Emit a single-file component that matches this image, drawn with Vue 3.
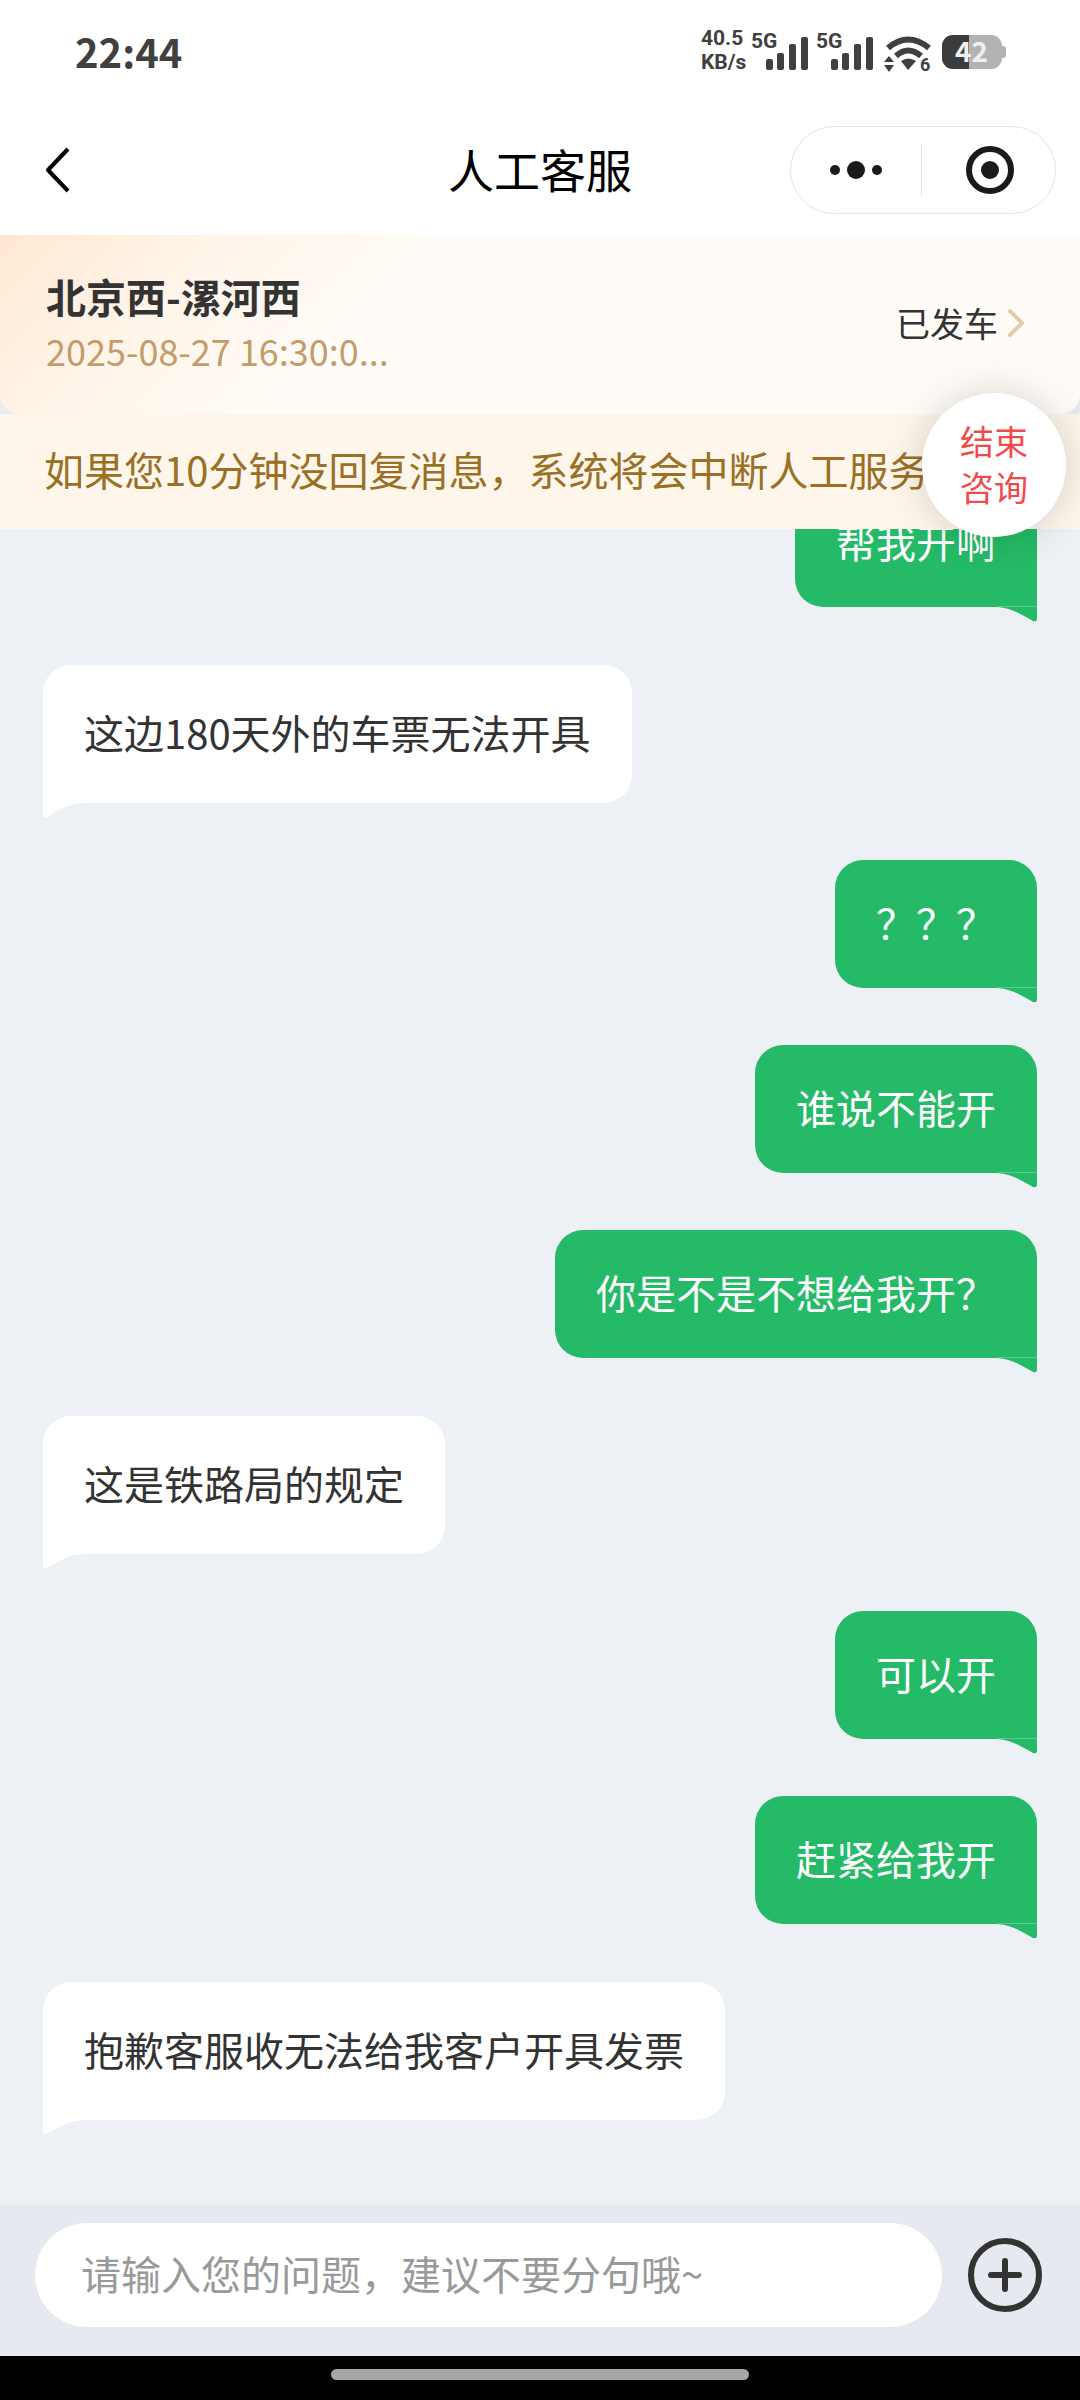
<script setup>
import { ref } from 'vue'

const draft = ref('')
const bars = [
  { x: 17, y: 27, h: 11 },
  { x: 28, y: 21, h: 17 },
  { x: 40, y: 12, h: 26 },
  { x: 52, y: 5, h: 33 },
]
const messages = [
  { id: 1, mine: true, text: '帮我开啊' },
  { id: 2, mine: false, text: '这边180天外的车票无法开具' },
  { id: 3, mine: true, text: '？？？' },
  { id: 4, mine: true, text: '谁说不能开' },
  { id: 5, mine: true, text: '你是不是不想给我开？' },
  { id: 6, mine: false, text: '这是铁路局的规定' },
  { id: 7, mine: true, text: '可以开' },
  { id: 8, mine: true, text: '赶紧给我开' },
  { id: 9, mine: false, text: '抱歉客服收无法给我客户开具发票' },
]
</script>

<template>
  <div class="app">
    <div class="status">
      <span class="clock">22:44</span>
      <div class="indicators">
        <div class="speed"><span>40.5</span><span>KB/s</span></div>
        <svg v-for="n in 2" :key="n" class="signal" width="60" height="40" viewBox="0 0 60 40">
          <text x="2" y="16" font-size="21">5G</text>
          <rect v-for="b in bars" :key="b.x" :x="b.x" :y="b.y" width="7" :height="b.h" rx="2" />
        </svg>
        <svg class="wifi" width="48" height="40" viewBox="0 0 48 40">
          <g fill="none" stroke="#404040" stroke-width="6">
            <path d="M4 16 Q24 -1 45 16" />
            <path d="M12 24 Q24 13 37 24" />
          </g>
          <path d="M17 29 Q24 24 32 29 L24 38Z" />
          <path d="M0 30 5 24 10 30ZM0 33H10L5 40Z" />
          <text x="36" y="39" font-size="18">6</text>
        </svg>
        <svg class="battery" width="64" height="34" viewBox="0 0 64 34">
          <rect width="60" height="34" rx="11" fill="#b3b3b3" />
          <path d="M60 11h1a3 3 0 0 1 3 3v6a3 3 0 0 1-3 3h-1z" fill="#b3b3b3" />
          <path d="M11 0H27V34H11A11 11 0 0 1 0 23V11A11 11 0 0 1 11 0Z" fill="#3c3c3c" />
          <text x="13" y="27" font-size="28" fill="#f0f0f0">42</text>
        </svg>
      </div>
    </div>

    <header class="nav">
      <button class="back" type="button" aria-label="返回">
        <svg width="24" height="44" viewBox="0 0 24 44" fill="none" stroke="#000" stroke-width="4" stroke-linejoin="round">
          <path d="M22 1 2 22 22 43" />
        </svg>
      </button>
      <h1>人工客服</h1>
      <div class="capsule">
        <button type="button" aria-label="更多">
          <svg width="52" height="18" viewBox="0 0 52 18" fill="#1a1a1a">
            <circle cx="5" cy="9" r="5" /><circle cx="26" cy="9" r="9" /><circle cx="47" cy="9" r="5" />
          </svg>
        </button>
        <button type="button" aria-label="关闭">
          <svg width="48" height="48" viewBox="0 0 48 48">
            <circle cx="24" cy="24" r="21" fill="none" stroke="#1a1a1a" stroke-width="6" />
            <circle cx="24" cy="24" r="9" fill="#1a1a1a" />
          </svg>
        </button>
      </div>
    </header>

    <section class="trip-wrap">
      <div class="trip">
        <div class="trip-info">
          <h2>北京西-漯河西</h2>
          <p>2025-08-27 16:30:0...</p>
        </div>
        <a class="trip-state" href="#">
          <span>已发车</span>
          <svg width="16" height="28" viewBox="0 0 16 28" fill="none" stroke="#e2cba8" stroke-width="4" stroke-linecap="round" stroke-linejoin="round">
            <path d="M2 2 14 14 2 26" />
          </svg>
        </a>
      </div>
    </section>

    <div class="notice">
      <p>如果您10分钟没回复消息，系统将会中断人工服务</p>
      <button class="finish" type="button">结束<br>咨询</button>
    </div>

    <main class="chat">
      <div v-for="m in messages" :key="m.id" class="bubble" :class="m.mine ? 'mine' : 'theirs'">
        {{ m.text }}
        <svg class="tail" width="40" height="15" viewBox="0 0 40 15">
          <path d="M0 0H40V12Q40 15 36 14C25 8 16 1 0 0Z" />
        </svg>
      </div>
    </main>

    <form class="composer" @submit.prevent>
      <input v-model="draft" type="text" aria-label="问题" placeholder="请输入您的问题，建议不要分句哦~">
      <button type="button" aria-label="添加">
        <svg width="76" height="76" viewBox="0 0 76 76" fill="none" stroke="#333" stroke-width="6" stroke-linecap="round">
          <circle cx="38" cy="38" r="34" />
          <path d="M38 24V52M24 38H52" />
        </svg>
      </button>
    </form>

    <div class="gesture"><span></span></div>
  </div>
</template>

<style>
body {
  margin: 0;
}
</style>

<style scoped>
.app {
  display: flex;
  flex-direction: column;
  height: 100vh;
  background: #edf0f5;
  color: #333;
  font-family: "Noto Sans CJK SC", sans-serif;
  font-size: 40px;
}
h1, h2, p {
  margin: 0;
}
button {
  display: flex;
  align-items: center;
  justify-content: center;
  padding: 0;
  border: 0;
  background: none;
  font-family: inherit;
}
svg {
  display: block;
  flex: none;
  overflow: visible;
}
.status {
  display: flex;
  flex: none;
  align-items: center;
  justify-content: space-between;
  height: 104px;
  padding: 0 74px 0 75px;
  background: #fff;
  color: #404040;
  font-weight: 700;
}
.clock {
  padding-bottom: 2px;
}
.indicators {
  display: flex;
  align-items: center;
  fill: #404040;
}
.speed {
  display: flex;
  flex-direction: column;
  width: 48px;
  padding-bottom: 4px;
  font-family: Roboto, sans-serif;
  font-size: 21px;
  line-height: 24px;
}
.signal {
  margin-right: 5px;
}
.signal text, .wifi text {
  font-family: Roboto, sans-serif;
}
.wifi {
  margin: 0 10px 0 5px;
}
.nav {
  display: grid;
  flex: none;
  grid-template-columns: 1fr auto 1fr;
  align-items: center;
  height: 131px;
  padding: 0 24px 0 46px;
  background: #fff;
}
.back {
  justify-self: start;
}
.nav h1 {
  padding: 0 0 4px 22px;
  margin-right: 44px;
  color: #000;
  font-size: 46px;
  font-weight: 400;
  line-height: 60px;
}
.capsule {
  display: flex;
  justify-self: end;
  align-items: center;
  box-sizing: border-box;
  width: 266px;
  height: 88px;
  border: 1px solid #e4e4e4;
  border-radius: 44px;
}
.capsule button {
  flex: 1;
  height: 52px;
}
.capsule button + button {
  padding-left: 4px;
  border-left: 1px solid #e4e4e4;
}
.trip-wrap {
  flex: none;
  background: #e8eaed;
}
.trip {
  display: flex;
  align-items: center;
  justify-content: space-between;
  box-sizing: border-box;
  height: 179px;
  padding: 0 56px 4px 46px;
  border-radius: 0 0 20px 20px;
  background: linear-gradient(135deg, #ffe8d2 0, #fff4e8 150px, #fffcf8 330px);
}
.trip-info {
  line-height: 54px;
}
.trip h2 {
  font-size: 40px;
  font-weight: 700;
}
.trip p {
  color: #c39c6a;
  font-size: 36px;
}
.trip-state {
  display: flex;
  align-items: center;
  gap: 10px;
  color: #333;
  font-size: 34px;
  line-height: 48px;
  text-decoration: none;
}
.notice {
  position: relative;
  z-index: 1;
  flex: none;
  padding: 0 44px 4px;
  background: #fef5eb;
  color: #997024;
  line-height: 111px;
  white-space: nowrap;
}
.finish {
  position: absolute;
  top: -21px;
  right: 14px;
  width: 144px;
  height: 144px;
  padding-bottom: 2px;
  border-radius: 50%;
  background: #fff;
  box-shadow: 0 0 40px rgba(0, 0, 0, 0.16);
  color: #f04a4a;
  font-size: 34px;
  line-height: 46px;
}
.chat {
  display: flex;
  flex: 1;
  flex-direction: column;
  justify-content: flex-end;
  min-height: 0;
  padding: 0 43px 85px;
  overflow: hidden;
}
.bubble {
  position: relative;
  flex: none;
  padding: 0 41px 4px;
}
.mine {
  align-self: flex-end;
  margin-top: 57px;
  border-radius: 28px 28px 0 28px;
  background: #25ba67;
  color: #fff;
  fill: #25ba67;
  line-height: 124px;
}
.theirs {
  align-self: flex-start;
  margin-top: 58px;
  border-radius: 28px 28px 28px 0;
  background: #fff;
  fill: #fff;
  line-height: 134px;
}
.tail {
  position: absolute;
  top: 100%;
}
.mine .tail {
  right: 0;
  border-top: 1px solid #58ca8b;
  margin-top: -1px;
}
.theirs .tail {
  left: 0;
  transform: scaleX(-1);
}
.composer {
  display: flex;
  flex: none;
  align-items: center;
  gap: 25px;
  padding: 18px 37px 29px 35px;
  background: #e7e9f1;
}
.composer input {
  flex: 1;
  box-sizing: border-box;
  min-width: 0;
  height: 104px;
  padding: 0 46px 4px;
  border: 0;
  border-radius: 52px;
  outline: 0;
  background: #fff;
  color: #333;
  font: inherit;
}
.composer input::placeholder {
  color: #999;
  opacity: 1;
}
.gesture {
  display: flex;
  flex: none;
  justify-content: center;
  padding: 13px 0 20px;
  background: #000;
}
.gesture span {
  width: 418px;
  height: 11px;
  border-radius: 6px;
  background: #a6a6a6;
}
</style>
